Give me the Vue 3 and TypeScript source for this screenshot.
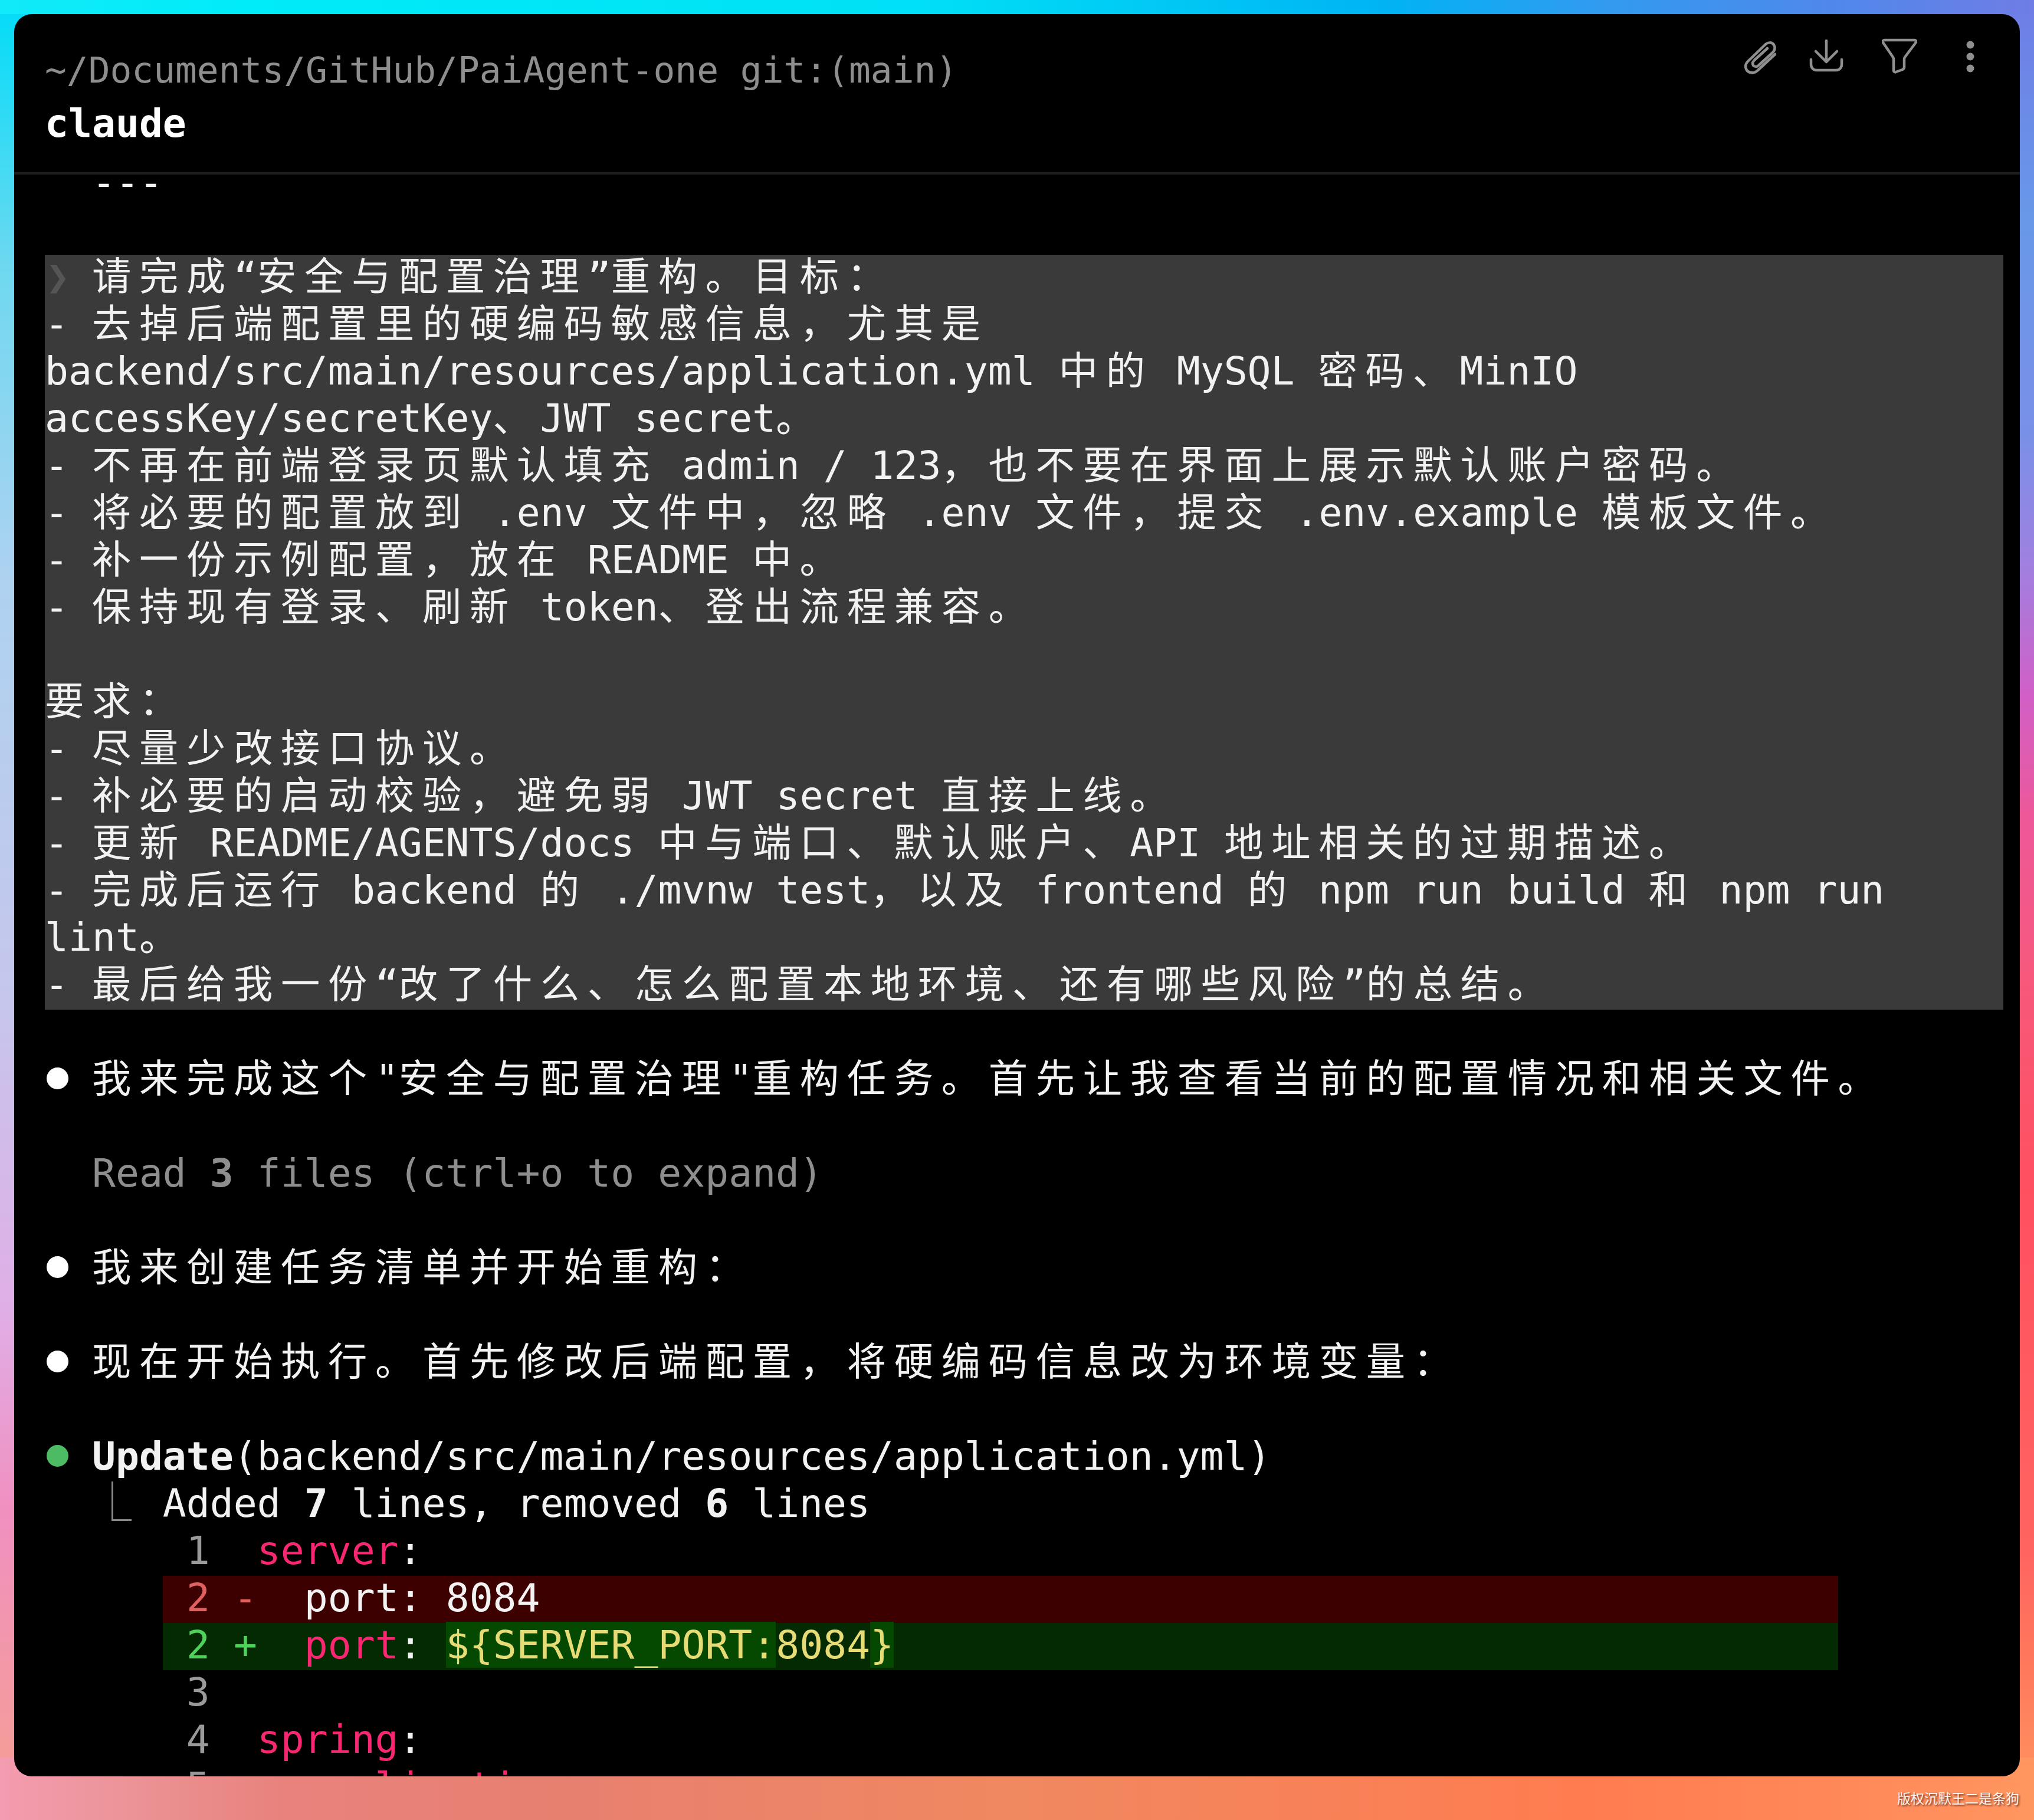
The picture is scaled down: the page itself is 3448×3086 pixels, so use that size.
<script setup lang="ts">
interface Seg { t: string; wide: boolean }
interface Span { text: string; cls?: string }
interface Row { spans?: Span[]; cls?: string; dot?: string; tree?: boolean }

const wideRe = /([\u3000-\u301c\u3040-\u9fff\uff00-\uffef]+)/

function segs(s: string): Seg[] {
  return s.split(wideRe).filter(Boolean).map((t) => ({ t, wide: wideRe.test(t) }))
}

const selected: string[] = [
  '  请完成“安全与配置治理”重构。目标：',
  '- 去掉后端配置里的硬编码敏感信息，尤其是',
  'backend/src/main/resources/application.yml 中的 MySQL 密码、MinIO',
  'accessKey/secretKey、JWT secret。',
  '- 不再在前端登录页默认填充 admin / 123，也不要在界面上展示默认账户密码。',
  '- 将必要的配置放到 .env 文件中，忽略 .env 文件，提交 .env.example 模板文件。',
  '- 补一份示例配置，放在 README 中。',
  '- 保持现有登录、刷新 token、登出流程兼容。',
  '',
  '要求：',
  '- 尽量少改接口协议。',
  '- 补必要的启动校验，避免弱 JWT secret 直接上线。',
  '- 更新 README/AGENTS/docs 中与端口、默认账户、API 地址相关的过期描述。',
  '- 完成后运行 backend 的 ./mvnw test，以及 frontend 的 npm run build 和 npm run',
  'lint。',
  '- 最后给我一份“改了什么、怎么配置本地环境、还有哪些风险”的总结。',
]

const after: Row[] = [
  {},
  { dot: 'white', spans: [{ text: '  我来完成这个"安全与配置治理"重构任务。首先让我查看当前的配置情况和相关文件。' }] },
  {},
  { spans: [{ text: '  Read ', cls: 'dim' }, { text: '3', cls: 'dim bold' }, { text: ' files (ctrl+o to expand)', cls: 'dim' }] },
  {},
  { dot: 'white', spans: [{ text: '  我来创建任务清单并开始重构：' }] },
  {},
  { dot: 'white', spans: [{ text: '  现在开始执行。首先修改后端配置，将硬编码信息改为环境变量：' }] },
  {},
  { dot: 'green', spans: [{ text: '  ' }, { text: 'Update', cls: 'bold' }, { text: '(backend/src/main/resources/application.yml)' }] },
  { tree: true, spans: [{ text: '     Added ' }, { text: '7', cls: 'bold' }, { text: ' lines, removed ' }, { text: '6', cls: 'bold' }, { text: ' lines' }] },
  { spans: [{ text: '      1  ', cls: 'num' }, { text: 'server', cls: 'key' }, { text: ':' }] },
  { cls: 'del', spans: [{ text: ' ' }, { text: '2 -', cls: 'red' }, { text: '  port: 8084' }] },
  { cls: 'add', spans: [{ text: ' ' }, { text: '2 +', cls: 'grn' }, { text: '  ' }, { text: 'port', cls: 'key' }, { text: ': ' }, { text: '${SERVER_PORT:', cls: 'hl' }, { text: '8084', cls: 'val' }, { text: '}', cls: 'hl' }] },
  { spans: [{ text: '      3', cls: 'num' }] },
  { spans: [{ text: '      4  ', cls: 'num' }, { text: 'spring', cls: 'key' }, { text: ':' }] },
  { spans: [{ text: '      5    ', cls: 'num' }, { text: 'application', cls: 'key' }, { text: ':' }] },
]
</script>

<template>
  <div class="page">
    <main class="win">
      <header class="head">
        <div class="prompt">
          <div class="cwd">~/Documents/GitHub/PaiAgent-one git:(main)</div>
          <div class="cmd">claude</div>
        </div>
        <div class="tools">
          <svg class="ic" viewBox="0 0 60 64" fill="none" stroke="currentColor" stroke-width="4.5" stroke-linecap="round" stroke-linejoin="round">
            <path d="M55 28 26 55C19 62 9 60 6 53 4 48 5 44 9 40L37 13C42 7 50 7 53 12 56 17 55 21 51 25L27 47C24 50 20 49 18 47 16 44 17 41 20 38L42 18" />
          </svg>
          <svg class="ic" viewBox="0 0 60 64" fill="none" stroke="currentColor" stroke-width="4.5" stroke-linecap="round" stroke-linejoin="round">
            <path d="M30 5V40M12 23 30 41 48 23M4 37V45C4 51 8 55 13 55H47C52 55 56 51 56 45V37" />
          </svg>
          <svg class="ic ic-filter" viewBox="0 0 60 64" fill="none" stroke="currentColor" stroke-width="4.5" stroke-linecap="round" stroke-linejoin="round">
            <path d="M2 8C1 5 3 4 5 4H55C58 4 59 6 57 9L39 33C38 34 38 35 38 37V50C38 52 37 53 35 54L24 58C22 59 20 58 20 55V37C20 35 20 34 19 33Z" />
          </svg>
          <svg class="ic ic-dots" viewBox="0 0 60 64" fill="currentColor">
            <circle cx="30" cy="12" r="6.5" />
            <circle cx="30" cy="32" r="6.5" />
            <circle cx="30" cy="52" r="6.5" />
          </svg>
        </div>
      </header>

      <section class="body">
        <div class="rows">
          <div class="row">{{ '  ---' }}</div>
          <div class="row"></div>

          <div class="sel">
            <span class="chev">❯</span>
            <div v-for="(line, i) in selected" :key="i" class="row">
              <span v-for="(s, j) in segs(line)" :key="j" :class="{ cjk: s.wide }">{{ s.t }}</span>
            </div>
          </div>

          <div v-for="(r, i) in after" :key="'a' + i" class="row" :class="r.cls">
            <i v-if="r.dot" class="dot" :class="r.dot"></i>
            <i v-if="r.tree" class="tree"></i>
            <template v-for="(sp, j) in r.spans" :key="j">
              <span v-for="(s, k) in segs(sp.text)" :key="k" :class="[sp.cls, { cjk: s.wide }]">{{ s.t }}</span>
            </template>
          </div>
        </div>
      </section>
    </main>
    <div class="mark">版权沉默王二是条狗</div>
  </div>
</template>

<style scoped>
.page {
  position: relative;
  box-sizing: border-box;
  width: 3448px;
  height: 3086px;
  padding: 24px 24px 74px;
  background-color: #f08860;
  background-image:
    linear-gradient(90deg, #f49cb0 0%, #ec9498 6%, #e8827c 14%, #e88070 28%, #f08860 50%, #ff7c50 78%, #ff8a5a 92%, #ff9660 100%),
    linear-gradient(90deg, #12eaf8 0%, #00ecf8 12%, #00e0f6 45%, #00b4f4 68%, #2f9cf0 78%, #5088ea 90%, #6f7de6 100%),
    linear-gradient(180deg, #00dcf8 0%, #70d8f0 15%, #aed2f0 32%, #c6c6ec 55%, #e0aee6 72%, #f090c0 83%, #f4a090 100%),
    linear-gradient(180deg, #6f7de6 0%, #6898e8 12%, #7a90e8 24%, #a080e0 31%, #d060c8 38%, #ee5898 45%, #f85878 55%, #ff5060 65%, #ff6460 85%, #ff7a5c 92%, #ff9a60 100%);
  background-repeat: no-repeat;
  background-position: left bottom, left top, left top, right top;
  background-size: 100% 106px, 100% 24px, 70px 100%, 70px 100%;
  overflow: hidden;
}
.win {
  display: flex;
  flex-direction: column;
  height: 100%;
  background: #000;
  border-radius: 30px;
  overflow: hidden;
  font-family: "DejaVu Sans Mono", monospace;
  font-size: 66.4px;
  line-height: 74px;
  color: #f2f2f2;
}
.head {
  flex: none;
  box-sizing: border-box;
  height: 272px;
  display: flex;
  justify-content: space-between;
  padding: 50px 54px 0 52px;
  border-bottom: 4px solid #1c1c1c;
}
.prompt { line-height: 90px; }
.cwd { color: #8e8e8e; font-size: 61.2px; }
.cmd { color: #fff; font-weight: 700; }
.tools {
  display: flex;
  gap: 52px;
  margin-top: -10px;
  color: #8f8f8f;
}
.ic { width: 60px; height: 64px; flex: none; }
.ic-filter { margin-left: 12px; }
.ic-dots { margin-left: 8px; }
.body { flex: 1; min-height: 0; overflow: hidden; }
.rows { margin-top: -24px; padding: 0 28px 0 52px; }
.row {
  position: relative;
  height: 80px;
  white-space: pre;
}
.cjk {
  font-family: "Noto Sans CJK SC", "DejaVu Sans Mono", sans-serif;
  letter-spacing: 13.6px;
  line-height: 0;
  font-weight: 400;
}
.sel { position: relative; background: #3a3a3a; }
.chev {
  position: absolute;
  left: 2px;
  top: 0;
  color: #555;
}
.dim { color: #8e8e8e; }
.bold { font-weight: 700; }
.num { color: #9a9a9a; }
.key { color: #f92672; }
.red { color: #e06060; }
.grn { color: #4fd25a; }
.hl { background: #054800; color: #e6db74; }
.val { color: #e6db74; }
.del { background: #3d0000; margin: 0 280px 0 200px; }
.add { background: #032a00; margin: 0 280px 0 200px; }
.dot {
  position: absolute;
  left: 3px;
  top: 18px;
  width: 37px;
  height: 37px;
  border-radius: 50%;
  background: #fff;
}
.dot.green { background: #4cbb63; }
.tree {
  position: absolute;
  left: 113px;
  top: 0;
  width: 34px;
  height: 67px;
  border-left: 3px solid #888;
  border-bottom: 3px solid #888;
  box-sizing: border-box;
}
.mark {
  position: absolute;
  right: 25px;
  bottom: 22px;
  font-family: "Noto Sans CJK SC", sans-serif;
  font-size: 23px;
  line-height: 32px;
  color: #fff;
  opacity: 0.9;
  text-shadow: 2px 2px 3px rgba(70, 20, 10, 0.85);
}
</style>
